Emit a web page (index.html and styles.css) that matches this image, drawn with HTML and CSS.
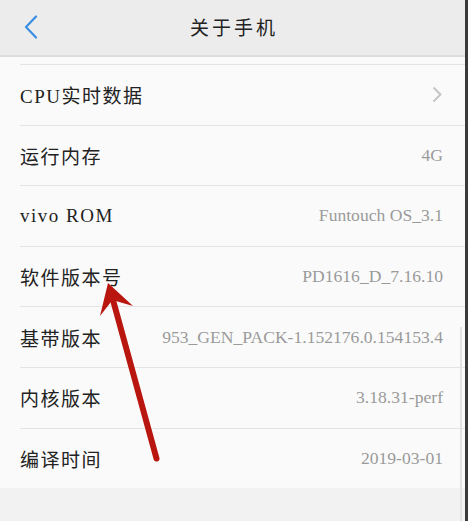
FILE: index.html
```html
<!DOCTYPE html>
<html lang="zh-CN">
<head>
<meta charset="utf-8">
<title>关于手机</title>
<link rel="stylesheet" href="styles.css">
</head>
<body>
<div class="screen">
  <div class="main">
    <header class="topbar">
      <svg class="back" width="14" height="24" viewBox="0 0 14 24"><path d="M12 1.5 L2 12 L12 22.5" fill="none" stroke="#3b8fe2" stroke-width="2.2" stroke-linecap="round" stroke-linejoin="round"/></svg>
      <h1 class="title">关于手机</h1>
    </header>
    <div class="topline"></div>
    <ul class="list">
      <li class="spacer"></li>
      <li class="row"><span class="label">CPU实时数据</span>
        <svg class="chev" width="10" height="17" viewBox="0 0 10 17"><path d="M1.5 1.5 L8.5 8.5 L1.5 15.5" fill="none" stroke="#c6c6c6" stroke-width="2" stroke-linejoin="round"/></svg>
      </li>
      <li class="row"><span class="label">运行内存</span><span class="value">4G</span></li>
      <li class="row"><span class="label">vivo ROM</span><span class="value">Funtouch OS_3.1</span></li>
      <li class="row"><span class="label">软件版本号</span><span class="value">PD1616_D_7.16.10</span></li>
      <li class="row"><span class="label">基带版本</span><span class="value">953_GEN_PACK-1.152176.0.154153.4</span></li>
      <li class="row"><span class="label">内核版本</span><span class="value">3.18.31-perf</span></li>
      <li class="row"><span class="label">编译时间</span><span class="value">2019-03-01</span></li>
    </ul>
    <div class="footer"></div>
    <div class="scrollbar"></div>
    <svg class="arrow" width="468" height="521" viewBox="0 0 468 521">
      <line x1="156.5" y1="458.5" x2="113" y2="300" stroke="#b8160f" stroke-width="6" stroke-linecap="round"/>
      <path d="M108 283 L100 316 L112.5 300 L133 306 Z" fill="#b8160f"/>
    </svg>
  </div>
  <div class="edge"></div>
</div>
</body>
</html>
```

FILE: styles.css
```css
* { box-sizing: border-box; margin: 0; padding: 0; }
html, body { width: 468px; height: 521px; overflow: hidden; }
body {
  font-family: "Liberation Serif", "Noto Sans CJK SC", serif;
  background: #f2f2f2;
  color: #222;
}
.screen { display: flex; width: 468px; height: 521px; }
.main { flex: 1; position: relative; display: flex; flex-direction: column; background: #f2f2f2; }
.edge { width: 3px; background: #3a3a3a; }
.topbar {
  height: 55px;
  background: #ececec;
  display: flex;
  align-items: center;
  justify-content: center;
  position: relative;
}
.back { position: absolute; left: 24px; top: 15px; }
.title {
  font-weight: normal;
  font-size: 19px;
  letter-spacing: 3px;
  color: #222;
  margin-left: 3px;
  margin-top: -3px;
}
.topline { height: 2px; background: #dcdcdc; }
.list { list-style: none; background: #fafafa; }
.spacer { height: 7px; }
.row {
  height: 60.6px;
  margin-left: 20px;
  border-top: 1px solid #e4e4e4;
  display: flex;
  align-items: center;
  justify-content: space-between;
  padding-right: 22px;
}
.label { font-size: 19px; letter-spacing: 1.5px; color: #222; }
.value { font-size: 17.6px; color: #9a9a9a; }
.chev { margin-right: 1px; }
.footer { flex: 1; background: #f2f2f2; }
.scrollbar {
  position: absolute;
  left: 460px;
  top: 327px;
  width: 2px;
  height: 194px;
  background: #e2e2e2;
}
.arrow { position: absolute; left: 0; top: 0; pointer-events: none; }
```
